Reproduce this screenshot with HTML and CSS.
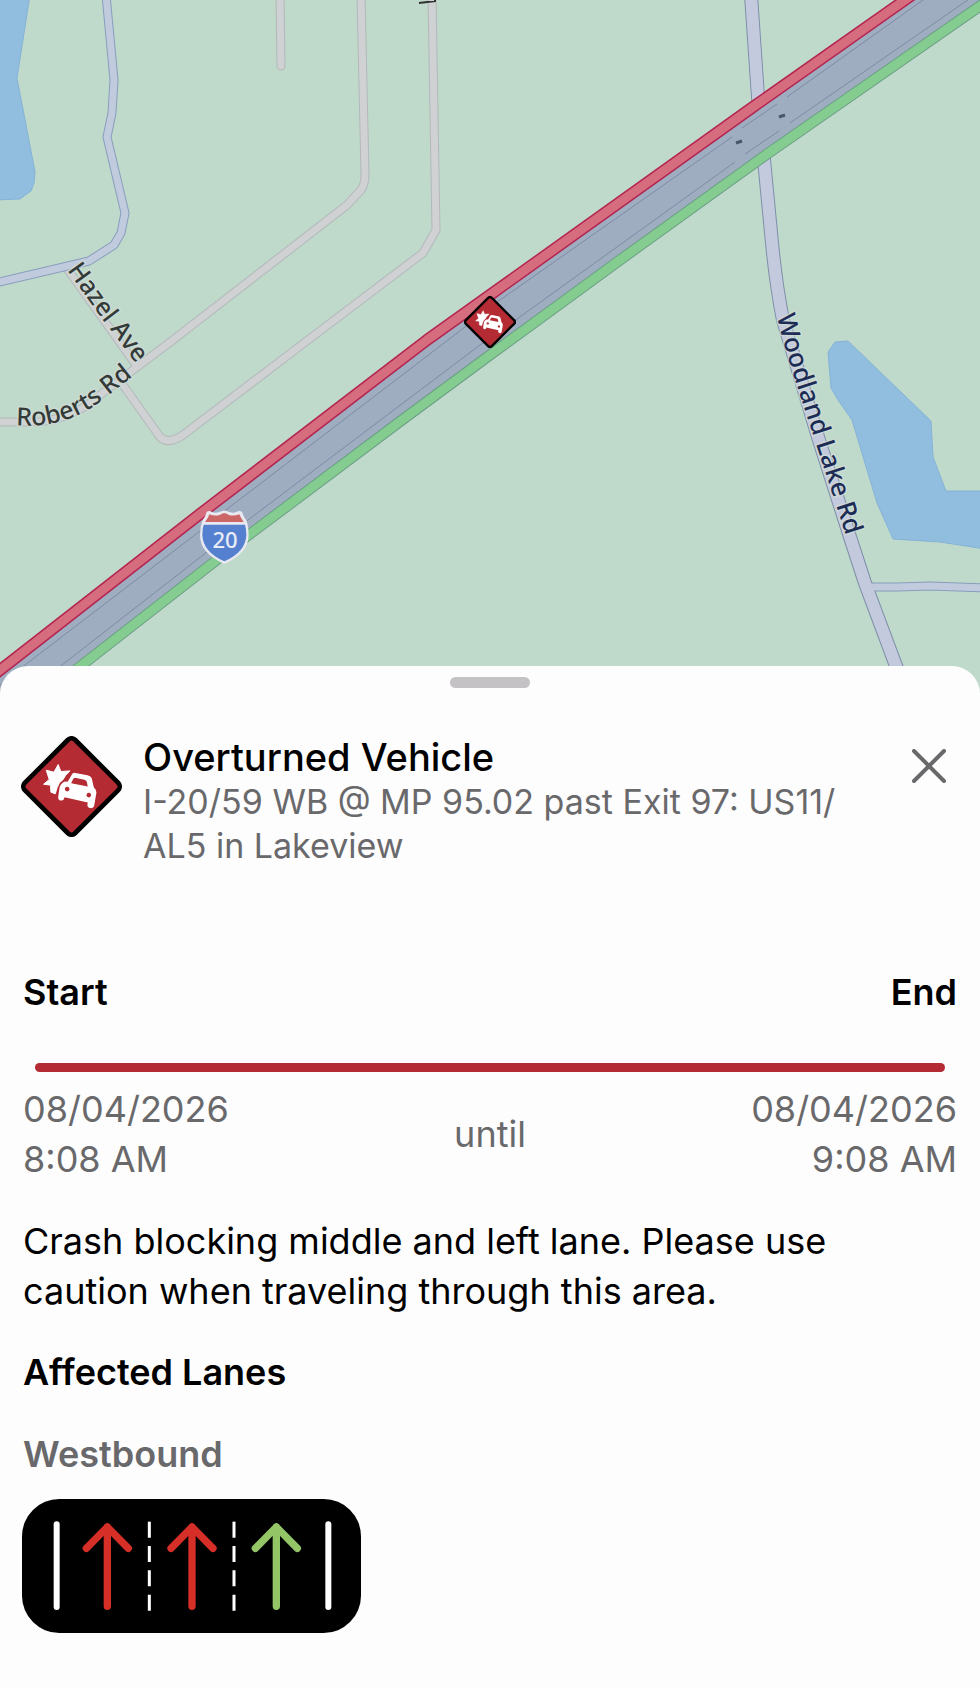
FILE: index.html
```html
<!DOCTYPE html>
<html lang="en">
<head>
<meta charset="utf-8">
<meta name="viewport" content="width=device-width, initial-scale=1">
<title>Overturned Vehicle</title>
<link rel="stylesheet" href="styles.css">
</head>
<body>
<main class="screen">
  <svg class="map" viewBox="0 0 980 700" preserveAspectRatio="xMidYMin slice" role="img" aria-label="Map of I-20 near Woodland Lake Rd">
    <defs>
      <path id="hazel" d="M67 270 L103 320 L138 366"/>
      <path id="roberts" d="M16 425 C52 428 76 419 100 402 L142 369"/>
      <path id="woodland" d="M777 316 C784 350 802 400 817 447 L854 560"/>
      <path id="left-road" d="M106 -5 L114 80 L112 113 L107 137 L125 213 L121 233 L114 245 L89 261 L-5 283"/>
      <path id="woodland-road" d="M751 -5 L758 97 L764 160 L773 253 Q777 290 783 320 L818 437 L850 537 L865 583 L905 690"/>
      <path id="branch-road" d="M868 587 L897 587 L930 586 L985 588"/>
      <g id="local-roads">
        <path d="M280 -5 L281 66"/>
        <path d="M361 -5 L365 175 Q365 184 361 190 L347 205 L173 340 L137 367 L100 395 Q70 422 30 422 L-5 422"/>
        <path d="M432 -5 L436 230 L423 253 L308 340 L183 435 Q168 445 160 437 L123 385"/>
        <path d="M68 270 L136 365"/>
      </g>
      <symbol id="crash" viewBox="62 47 304 304">
        <rect x="107" y="92" width="214" height="214" rx="15" transform="rotate(45 214 199)" fill="#b52b34" stroke="#000" stroke-width="14"/>
        <path fill="#fff" stroke="#fff" stroke-width="3" stroke-linejoin="round" d="M174 133 L182 154 L209 152 L196 166 Q188 182 178 187 L171 202 L165 221 L152 216 L151 195 L130 192 L147 178 L138 150 L161 156 Z"/>
        <path fill="#fff" fill-rule="evenodd" d="M216 161 Q219 157 226 158 L262 165 Q271 167 275 174 L281 201 Q289 208 289 218 L282 258 Q279 266 271 264 Q261 263 262 253 L263 247 L193 231 L191 237 Q187 243 180 241 Q173 239 174 230 L178 203 Q180 192 192 185 L203 184 Z M224 173 Q220 174 218 179 L213 189 L263 199 L260 185 Q258 180 253 179 Z M201 200 a7 7 0 1 0 .1 0 Z M266 218 a7 7 0 1 0 .1 0 Z"/>
      </symbol>
    </defs>

    <rect width="980" height="700" fill="#bfd9cb"/>
    <g class="water">
      <path d="M-5 -5 L30 -5 L17 78 L35 172 L34 183 L31 191 L20 199 L-5 200 Z"/>
      <path d="M835 342 L848 341 L931 421 L933 457 L946 491 L985 491 L985 549 L940 542 L893 539 L877 503 L852 420 L838 400 L831 388 L828 352 Z"/>
    </g>

    <g class="road local-case"><use href="#local-roads"/></g>
    <g class="road local-fill"><use href="#local-roads"/></g>
    <g class="road town-case"><use href="#left-road"/><use href="#branch-road"/></g>
    <use class="road main-case" href="#woodland-road"/>
    <g class="road town-fill"><use href="#left-road"/><use href="#branch-road"/></g>
    <use class="road main-fill" href="#woodland-road"/>

    <path fill="#9fadc1" d="M0 670 L200 514 L427 340 L490 295 L753 107 L905 0 L990 -5 L980 6 L770 152 L490 354 L250 534 L82 665 L30 706 L0 706 Z"/>
    <g class="lane-edge">
      <path d="M-5 689 L25 665 L200 531 L222 513 L448 340 L500 300 L732 137 M742 128 L777 104 M787 97 L930 -5"/>
      <path d="M22 697 L62 665 L248 520 L480 345 L517 319 L735 162 M745 154 L779 131 M790 123 L975 -5"/>
    </g>
    <path class="mark" d="M736 143 L742 141 M779 117 L785 115"/>
    <g class="band">
      <path stroke="#b32450" stroke-width="12" d="M-5 674 L200 514 L427 340 L490 295 L753 107 L912 -5"/>
      <path stroke="#d66d7e" stroke-width="9" d="M-5 674 L200 514 L427 340 L490 295 L753 107 L912 -5"/>
      <path stroke="#6c9f86" stroke-width="11" d="M30 706 L82 665 L250 534 L402 420 L490 355 L620 260 L770 152 L990 -1"/>
      <path stroke="#84cc8f" stroke-width="9" d="M30 706 L82 665 L250 534 L402 420 L490 355 L620 260 L770 152 L990 -1"/>
    </g>

    <g class="street">
      <text><textPath href="#hazel">Hazel Ave</textPath></text>
      <text><textPath href="#roberts">Roberts Rd</textPath></text>
      <text class="street-main"><textPath href="#woodland">Woodland Lake Rd</textPath></text>
    </g>
    <path d="M419 3 L435 1 V-4" fill="none" stroke="#333" stroke-width="2"/>

    <svg x="200" y="510" width="50" height="54" viewBox="60 60 150 162">
      <path fill="#e8e8f0" d="M80 66 Q87 59 97 67 Q110 71 124 64 Q133 59 142 64 Q156 71 168 67 Q178 59 186 66 Q192 84 200 92 Q206 110 206 135 Q206 190 133 222 Q60 190 60 135 Q60 110 67 92 Q77 80 80 66 Z"/>
      <path fill="#cc6666" d="M88 73 Q104 80 121 74 Q133 66 145 74 Q160 80 178 73 Q183 86 191 96 H75 Q84 86 88 73 Z"/>
      <path fill="#5480cf" d="M71 104 H195 Q199 116 199 135 Q197 186 133 214 Q69 186 67 135 Q67 116 71 104 Z"/>
    </svg>
    <text class="shield-number" x="225" y="548">20</text>

    <use href="#crash" x="464" y="296" width="52" height="52"/>
  </svg>

  <section class="sheet" aria-labelledby="title">
    <div class="handle"></div>
    <header class="head">
      <svg class="head-icon" aria-hidden="true"><use href="#crash"/></svg>
      <div class="head-text">
        <h1 class="title" id="title">Overturned Vehicle</h1>
        <p class="place">I-20/59 WB @ MP 95.02 past Exit 97: US11/<wbr>AL5 in Lakeview</p>
      </div>
      <button class="close" type="button" aria-label="Close">
        <svg class="close-icon" viewBox="0 0 34 34" aria-hidden="true"><path d="M2 2 L32 32 M32 2 L2 32"/></svg>
      </button>
    </header>

    <div class="range-labels">
      <h2 class="heading">Start</h2>
      <h2 class="heading">End</h2>
    </div>
    <div class="range-bar"></div>
    <div class="range-dates">
      <p class="date">08/04/2026<br>8:08 AM</p>
      <p class="until">until</p>
      <p class="date date-end">08/04/2026<br>9:08 AM</p>
    </div>

    <p class="description">Crash blocking middle and left lane. Please use caution when traveling through this area.</p>

    <h2 class="heading">Affected Lanes</h2>
    <h3 class="heading direction">Westbound</h3>
    <svg class="lanes" viewBox="66 58 1017 402" role="img" aria-label="Left lane closed, middle lane closed, right lane open">
      <defs><path id="arrow" d="M0 380 V142 M-63 206 L0 142 L63 206"/></defs>
      <rect x="66" y="58" width="1017" height="402" rx="112" fill="#000"/>
      <g class="solid"><path d="M170 134 V382"/><path d="M985 134 V382"/></g>
      <g class="dashed"><path d="M448 126 V393"/><path d="M702 126 V393"/></g>
      <g class="arrows">
        <use href="#arrow" x="322" stroke="#d52f27"/>
        <use href="#arrow" x="576" stroke="#d52f27"/>
        <use href="#arrow" x="829" stroke="#93c566"/>
      </g>
    </svg>
  </section>
</main>
</body>
</html>
```
FILE: styles.css
```css
* {
  box-sizing: border-box;
}

body {
  margin: 0;
  background: #fdfdfd;
  color: #000;
  font-family: Inter, "Liberation Sans", sans-serif;
}

h1, h2, h3, p {
  margin: 0;
}

.screen {
  display: flex;
  flex-direction: column;
  min-height: 100vh;
}

/* Map */
.map {
  display: block;
  width: 100%;
  height: 700px;
}

.water {
  fill: #91bddf;
  stroke: #85b3d6;
  stroke-width: 1;
}

.road, .band, .lane-edge {
  fill: none;
  stroke-linejoin: round;
}

.local-case {
  stroke: #b3b8bb;
  stroke-width: 9;
  stroke-linecap: round;
}

.local-fill {
  stroke: #cfd1d2;
  stroke-width: 7;
  stroke-linecap: round;
}

.town-case {
  stroke: #8a9dbd;
  stroke-width: 9;
}

.town-fill {
  stroke: #c0cbdd;
  stroke-width: 7;
}

.main-case {
  stroke: #7f8faa;
  stroke-width: 14;
}

.main-fill {
  stroke: #c4cadd;
  stroke-width: 12;
}

.lane-edge {
  stroke: #7d8ba5;
  stroke-width: 1;
}

.mark {
  stroke: #4a566c;
  stroke-width: 3;
}

.street {
  font-family: "Noto Sans", sans-serif;
  font-size: 25px;
  font-weight: 500;
  fill: #333a38;
  stroke: #d2ddd8;
  stroke-width: 3;
  stroke-opacity: 0.7;
  paint-order: stroke;
}

.street-main {
  font-size: 26px;
  fill: #1c2c55;
}

.shield-number {
  font-family: "Noto Sans", sans-serif;
  font-size: 22px;
  font-weight: 500;
  fill: #e8ecf6;
  text-anchor: middle;
}

/* Sheet */
.sheet {
  position: relative;
  flex: 1;
  display: flex;
  flex-direction: column;
  margin-top: -34px;
  padding: 11px 23px 56px;
  border-radius: 28px 28px 0 0;
  background: #fdfdfd;
}

.handle {
  align-self: center;
  width: 80px;
  height: 11px;
  border-radius: 6px;
  background: #c4c2c4;
}

.head {
  display: flex;
  align-items: flex-start;
  gap: 21px;
  margin-top: 46px;
}

.head-icon {
  flex: none;
  width: 101px;
  height: 101px;
  margin: 2px 0 0 -2px;
}

.head-text {
  flex: 1;
}

.title {
  font-size: 38px;
  line-height: 46px;
  font-weight: 500;
}

.place {
  font-size: 34px;
  line-height: 44px;
  color: #69696c;
}

.close {
  flex: none;
  margin: 7px -5px 0 0;
  padding: 8px 16px;
  border: 0;
  background: none;
  color: #69696c;
}

.close-icon {
  display: block;
  width: 34px;
  height: 34px;
  fill: none;
  stroke: currentColor;
  stroke-width: 4;
  stroke-linecap: round;
}

.heading {
  font-size: 36px;
  line-height: 46px;
  font-weight: 600;
}

.range-labels {
  display: flex;
  justify-content: space-between;
  margin-top: 101px;
}

.range-bar {
  height: 9px;
  margin: 48px 12px 12px;
  border-radius: 5px;
  background: #b52b34;
}

.range-dates {
  display: grid;
  grid-template-columns: 1fr auto 1fr;
  align-items: center;
  color: #69696c;
}

.date, .until, .description {
  font-size: 36px;
  line-height: 50px;
}

.date-end {
  text-align: right;
}

.description {
  margin: 32px 0 33px;
}

.direction {
  margin: 36px 0 22px;
  color: #69696c;
}

/* Lane sign */
.lanes {
  width: 339px;
  height: 134px;
  margin-left: -1px;
}

.solid, .dashed, .arrows {
  fill: none;
}

.solid {
  stroke: #fff;
  stroke-width: 18;
  stroke-linecap: round;
}

.dashed {
  stroke: #fff;
  stroke-width: 9;
  stroke-dasharray: 48 25;
}

.arrows {
  stroke-width: 22;
  stroke-linecap: round;
  stroke-linejoin: round;
}
```
